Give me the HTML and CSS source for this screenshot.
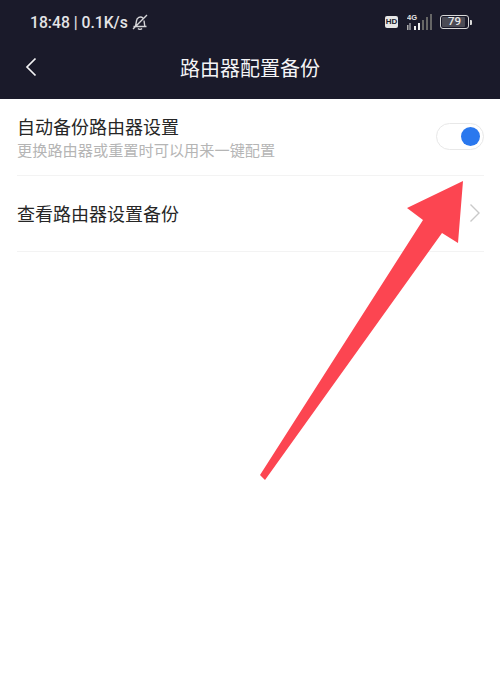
FILE: index.html
```html
<!DOCTYPE html>
<html lang="zh">
<head>
<meta charset="utf-8">
<title>路由器配置备份</title>
<link rel="stylesheet" href="styles.css">
</head>
<body>
<div class="page">
  <header class="header">
    <div class="status">
      <div class="status-left">
        <span class="status-text">18:48 | 0.1K/s</span>
        <svg class="bell" viewBox="0 0 18 18" width="18" height="18"><path d="M2.500 13.500h13M4.500 13.500 5.500 8a4 4 0 0 1 6.500-3M13 7.500l.8 6M7 15.500c1 1.200 3 1.200 4 0M2 16 16 2" fill="none" stroke="#d5d5d8" stroke-width="1.400"/></svg>
      </div>
      <div class="status-right">
        <span class="hd">HD</span>
        <svg class="signal" viewBox="0 0 27 18" width="27" height="18">
          <text x="0" y="6.500" class="net">4G</text>
          <rect x="0" y="12" width="1.500" height="5" fill="#aaa"/>
          <rect x="2.500" y="10" width="1" height="7" fill="#ddd"/>
          <rect x="7" y="13" width="2" height="4" fill="#eee"/>
          <rect x="11" y="10" width="2" height="7" fill="#eee"/>
          <rect x="15" y="7" width="2" height="10" fill="#666"/>
          <rect x="19" y="4" width="2" height="13" fill="#666"/>
          <rect x="23" y="1" width="2" height="16" fill="#666"/>
        </svg>
        <div class="battery"><span class="battery-fill"></span><span class="battery-num">79</span></div>
        <span class="battery-cap"></span>
      </div>
    </div>
    <nav class="nav">
      <svg class="back" viewBox="0 0 12 20" width="12" height="20"><path d="M10.500 1.500 2 10l8.500 8.500" fill="none" stroke="#f2f2f4" stroke-width="1.700"/></svg>
      <h1 class="title">路由器配置备份</h1>
    </nav>
  </header>
  <main class="list">
    <div class="row row-first">
      <div class="row-body">
        <div class="row-title">自动备份路由器设置</div>
        <div class="row-sub">更换路由器或重置时可以用来一键配置</div>
      </div>
      <div class="toggle"><span class="knob"></span></div>
    </div>
    <div class="row row-second">
      <div class="row-title">查看路由器设置备份</div>
      <svg class="chev" viewBox="0 0 12 20" width="12" height="20"><path d="M1.500 1.500 10 10l-8.500 8.500" fill="none" stroke="#c9c9c9" stroke-width="1.400"/></svg>
    </div>
  </main>
  <svg class="arrow" viewBox="0 0 500 694" width="500" height="694"><polygon points="463,181 407,208 423,220 260,475 265,480 442,233 458,243" fill="#fc4551"/></svg>
</div>
</body>
</html>
```
FILE: styles.css
```css
* { box-sizing: border-box; margin: 0; padding: 0; }
html, body { width: 500px; height: 694px; overflow: hidden; background: #fff; }
body { font-family: "Noto Sans CJK SC", "Noto Sans", sans-serif; }
.page { position: relative; width: 500px; height: 694px; }
.header { height: 99px; background: #1a1a2a; color: #f2f2f4; }
.status { height: 44px; padding: 0 28px 0 30px; display: flex; justify-content: space-between; align-items: center; }
.status-left { display: flex; align-items: center; gap: 3px; }
.status-text { font-family: Roboto, "Liberation Sans", sans-serif; font-size: 15.700px; font-weight: 500; color: #e4e4e6; white-space: nowrap; }
.bell { display: block; }
.status-right { display: flex; align-items: center; }
.hd { width: 13px; height: 12px; background: #e6e6e6; color: #1a1a2a; border-radius: 2px; font: 700 8px/12px "Liberation Sans", sans-serif; text-align: center; margin-right: 9px; }
.signal { display: block; margin-right: 6px; }
.net { font: 700 7.500px "Liberation Sans", sans-serif; fill: #e6e6e6; }
.battery { position: relative; width: 29px; height: 14px; border: 1.500px solid #d8d8d8; border-radius: 3px; display: flex; align-items: center; justify-content: center; }
.battery-fill { position: absolute; left: 1px; top: 1px; bottom: 1px; width: 86%; background: #4b4b55; border-radius: 1px; }
.battery-num { position: relative; font: 500 11.500px/1 Roboto, sans-serif; color: #e8e8e8; }
.battery-cap { width: 2px; height: 5px; margin-left: 1px; background: #d8d8d8; border-radius: 0 1px 1px 0; }
.nav { position: relative; height: 47px; display: flex; align-items: center; justify-content: center; }
.back { position: absolute; left: 25px; top: 13px; display: block; }
.title { font-size: 20px; font-weight: 400; color: #f4f4f6; line-height: 1; }
.list { padding: 0 16px 0 17px; }
.row { display: flex; align-items: center; justify-content: space-between; border-bottom: 1px solid #f3f3f3; }
.row-first { height: 77px; padding-bottom: 2px; }
.row-second { height: 76px; padding-bottom: 2px; }
.row-title { font-size: 18px; line-height: 24px; color: #262626; }
.row-sub { font-size: 15.200px; line-height: 20px; color: #b5b5b5; margin-top: 1px; }
.toggle { width: 48px; height: 27px; border: 1px solid #e8e8e8; border-radius: 14px; background: #fff; position: relative; }
.knob { position: absolute; right: 3px; top: 3px; width: 19px; height: 19px; border-radius: 50%; background: #2a78ee; }
.chev { display: block; margin-right: 3px; margin-top: 1px; }
.arrow { position: absolute; left: 0; top: 0; display: block; pointer-events: none; }
```
